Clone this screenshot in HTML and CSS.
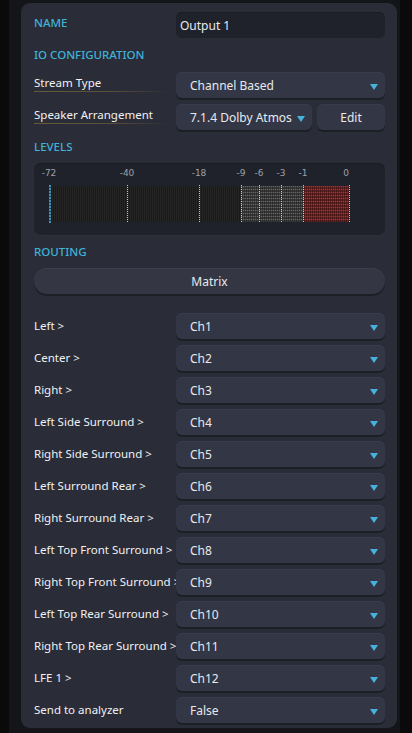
FILE: index.html
```html
<!DOCTYPE html>
<html>
<head>
<meta charset="utf-8">
<link rel="stylesheet" href="styles.css">
</head>
<body>
<div class="screen">
  <div class="frame">
    <main class="panel">
      <div class="row name-row">
        <span class="head">NAME</span>
        <div class="field input">Output 1</div>
      </div>

      <div class="head sec sec-io">IO CONFIGURATION</div>
      <div class="row">
        <span class="label ul">Stream Type</span>
        <div class="field select">Channel Based<i class="arrow"></i></div>
      </div>
      <div class="row row-gap">
        <span class="label ul">Speaker Arrangement</span>
        <div class="pair">
          <div class="field select">7.1.4 Dolby Atmos<i class="arrow"></i></div>
          <div class="field btn">Edit</div>
        </div>
      </div>

      <div class="head sec sec-levels">LEVELS</div>
      <div class="meter">
        <div class="scale">
          <span class="tick" style="left:0px">-72</span>
          <span class="tick" style="left:78px">-40</span>
          <span class="tick" style="left:150px">-18</span>
          <span class="tick" style="left:192px">-9</span>
          <span class="tick" style="left:210px">-6</span>
          <span class="tick" style="left:232px">-3</span>
          <span class="tick" style="left:254px">-1</span>
          <span class="tick" style="left:297px">0</span>
        </div>
        <div class="bars">
          <div class="seg seg-dark" style="width:192px"></div>
          <div class="seg seg-grey" style="width:62px"></div>
          <div class="seg seg-red" style="width:46px"></div>
          <i class="level"></i>
          <i class="dot" style="left:78px"></i>
          <i class="dot" style="left:150px"></i>
          <i class="dot" style="left:192px"></i>
          <i class="dot" style="left:210px"></i>
          <i class="dot" style="left:232px"></i>
          <i class="dot" style="left:254px"></i>
          <i class="dot" style="left:300px"></i>
        </div>
      </div>

      <div class="head sec sec-routing">ROUTING</div>
      <div class="matrix">Matrix</div>

      <div class="routes">
        <div class="row"><span class="label">Left &gt;</span><div class="field select">Ch1<i class="arrow"></i></div></div>
        <div class="row"><span class="label">Center &gt;</span><div class="field select">Ch2<i class="arrow"></i></div></div>
        <div class="row"><span class="label">Right &gt;</span><div class="field select">Ch3<i class="arrow"></i></div></div>
        <div class="row"><span class="label">Left Side Surround &gt;</span><div class="field select">Ch4<i class="arrow"></i></div></div>
        <div class="row"><span class="label">Right Side Surround &gt;</span><div class="field select">Ch5<i class="arrow"></i></div></div>
        <div class="row"><span class="label">Left Surround Rear &gt;</span><div class="field select">Ch6<i class="arrow"></i></div></div>
        <div class="row"><span class="label">Right Surround Rear &gt;</span><div class="field select">Ch7<i class="arrow"></i></div></div>
        <div class="row"><span class="label">Left Top Front Surround &gt;</span><div class="field select">Ch8<i class="arrow"></i></div></div>
        <div class="row"><span class="label">Right Top Front Surround &gt;</span><div class="field select">Ch9<i class="arrow"></i></div></div>
        <div class="row"><span class="label">Left Top Rear Surround &gt;</span><div class="field select">Ch10<i class="arrow"></i></div></div>
        <div class="row"><span class="label">Right Top Rear Surround &gt;</span><div class="field select">Ch11<i class="arrow"></i></div></div>
        <div class="row"><span class="label">LFE 1 &gt;</span><div class="field select">Ch12<i class="arrow"></i></div></div>
        <div class="row"><span class="label">Send to analyzer</span><div class="field select">False<i class="arrow"></i></div></div>
      </div>
    </main>
  </div>
</div>
</body>
</html>
```

FILE: styles.css
```css
* { box-sizing: border-box; }
html, body { margin: 0; padding: 0; }
body {
  background: #0a0a0b;
  font-family: "Noto Sans", "Open Sans", sans-serif;
  font-size: 12px;
  color: #e6e7ea;
}
.screen {
  height: 733px;
  padding-left: 9px;
  display: flex;
}
.frame {
  background: #141519;
  padding: 3px 3px 5px 12px;
  display: flex;
}
.panel {
  width: 376px;
  height: 725px;
  background: #2a2c37;
  border-radius: 9px;
  padding: 9px 12px 0 13px;
  display: flex;
  flex-direction: column;
}
.row {
  display: grid;
  grid-template-columns: 142px 209px;
  align-items: center;
  height: 26px;
}
.row-gap { margin-top: 6px; }
.head {
  color: #40b2d8;
  font-weight: 500;
  font-size: 11.5px;
}
.name-row .head { align-self: start; padding-top: 3px; }
.sec { height: 20px; line-height: 20px; padding-top: 1px; }
.sec-io { margin-top: 6px; margin-bottom: 8px; }
.sec-levels { margin-top: 6px; margin-bottom: 7px; }
.sec-routing { margin-top: 6px; margin-bottom: 7px; }
.label {
  white-space: nowrap;
  overflow: hidden;
  line-height: 16px;
  font-weight: 400;
  font-size: 11.5px;
  color: #f0f1f4;
  padding-right: 1px;
}
.label.ul {
  align-self: start;
  padding-top: 3px;
  padding-bottom: 1px;
  margin-right: 8px;
  background: linear-gradient(90deg, #6a5a3c 0%, #5a4e3a 60%, rgba(70,64,56,0) 100%) bottom left / 100% 1px no-repeat;
}
.field {
  height: 26px;
  border-radius: 6px;
  background: #333644;
  box-shadow: 0 2px 0 #1d1f27, inset 0 1px 0 #393c4b;
  display: flex;
  align-items: center;
  padding-left: 14px;
  position: relative;
  color: #e8e9ee;
}
.field.input {
  background: #20222b;
  box-shadow: inset 0 1px 0 #1b1c24;
  padding-left: 4px;
}
.arrow {
  position: absolute;
  right: 7px;
  top: 12px;
  width: 0;
  height: 0;
  border-left: 4.5px solid transparent;
  border-right: 4.5px solid transparent;
  border-top: 6px solid #46b3dc;
}
.pair {
  display: grid;
  grid-template-columns: 136px 68px;
  gap: 5px;
}
.btn { justify-content: center; padding-left: 0; }

.meter {
  height: 72px;
  background: #20222b;
  border-radius: 7px;
  box-shadow: inset 0 1px 0 #1b1c23, 0 1px 0 #2e3039;
  padding: 3px 0 0 15px;
}
.scale {
  position: relative;
  width: 300px;
  height: 15px;
  font-family: "DejaVu Sans", sans-serif;
  font-size: 9px;
  color: #9ea1a8;
}
.tick {
  position: absolute;
  top: 1px;
  transform: translateX(-50%);
  line-height: 12px;
}
.bars {
  position: relative;
  margin-top: 5px;
  width: 300px;
  height: 36px;
  display: flex;
}
.seg { height: 36px; }
.seg-dark {
  background:
    repeating-linear-gradient(90deg, #1a1a1b 0 1px, #252526 1px 2px);
}
.seg-grey {
  background:
    repeating-linear-gradient(90deg, rgba(0,0,0,0) 0 1px, rgba(30,30,30,0.55) 1px 2px),
    repeating-linear-gradient(180deg, #666 0 1px, #3a3a3a 1px 3px);
}
.seg-red {
  background:
    repeating-linear-gradient(90deg, rgba(0,0,0,0) 0 1px, rgba(40,10,10,0.5) 1px 2px),
    repeating-linear-gradient(180deg, #b03434 0 1px, #682222 1px 3px);
}
.dot {
  position: absolute;
  top: -1px;
  width: 1px;
  height: 38px;
  background: repeating-linear-gradient(180deg, #c8c8c8 0 1px, transparent 1px 2px);
}
.level {
  position: absolute;
  left: 0;
  top: -1px;
  width: 2px;
  height: 38px;
  background: repeating-linear-gradient(180deg, #3f93b4 0 2px, #24495a 2px 3px);
}

.matrix {
  height: 26px;
  border-radius: 13px;
  background: #343644;
  box-shadow: 0 2px 0 #1d1f27, inset 0 1px 0 #3a3d4c;
  display: flex;
  align-items: center;
  justify-content: center;
  color: #e8e9ee;
}
.routes {
  margin-top: 19px;
  display: flex;
  flex-direction: column;
  gap: 6px;
}
```
